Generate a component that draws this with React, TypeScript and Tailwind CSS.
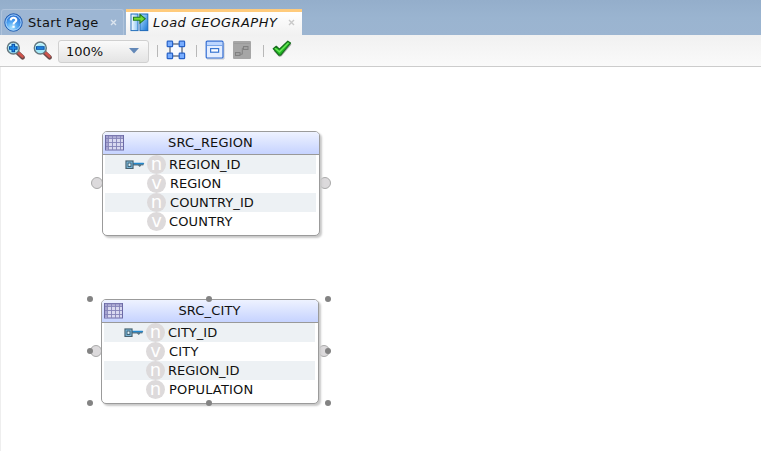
import React from 'react';

type Column = { name: string; kind: 'n' | 'v'; pk?: boolean; indent: string };

function HelpIcon() {
  return (
    <svg width="19" height="19" viewBox="0 0 19 19" className="shrink-0">
      <defs>
        <radialGradient id="help" cx=".4" cy=".8" r=".75">
          <stop offset="0" stopColor="#a4e0ff" />
          <stop offset=".5" stopColor="#4ba0f0" />
          <stop offset="1" stopColor="#286bd0" />
        </radialGradient>
      </defs>
      <circle cx="9.5" cy="9.5" r="8.7" fill="url(#help)" stroke="#225caf" strokeWidth="1" />
      <circle cx="9.5" cy="9.5" r="7.6" fill="none" stroke="#a9d4fb" strokeWidth="1" />
      <path d="M6.7 7.4C6.8 3.9 12.3 4 12.3 7.1C12.3 9.1 9.5 9 9.5 11.4" fill="none" stroke="#fff" strokeWidth="2.1" />
      <rect x="8.4" y="12.6" width="2.3" height="2.2" fill="#fff" />
    </svg>
  );
}

function MappingIcon() {
  return (
    <svg width="19" height="19" viewBox="0 0 19 19" className="shrink-0">
      <defs>
        <linearGradient id="mapL" x2="1"><stop stopColor="#fff" /><stop offset="1" stopColor="#87c3f4" /></linearGradient>
        <linearGradient id="mapR" x2="1" y2="1"><stop stopColor="#b5e3ff" /><stop offset="1" stopColor="#1976d6" /></linearGradient>
      </defs>
      <rect x="1" y="1" width="7" height="16.6" fill="url(#mapL)" stroke="#246fbb" />
      <rect x="10" y="1" width="7.8" height="16.6" fill="url(#mapR)" stroke="#1c68b9" />
      <path d="M3.5 4.2H10V1.4L15.2 5.8L10 10.1V7.3H3.5Z" fill="#75dc35" stroke="#247c1d" strokeWidth="1.1" />
    </svg>
  );
}

function Magnifier({ plus }: { plus?: boolean }) {
  return (
    <svg width="19" height="19" viewBox="0 0 19 19" className="shrink-0">
      <path d="M11.8 11.8L16.6 16.4" stroke="#6a4a4a" strokeWidth="4.4" strokeLinecap="round" />
      <path d="M12.4 11.7L16.5 15.5" stroke="#d0544c" strokeWidth="2.6" strokeLinecap="round" />
      <circle cx="7.3" cy="7" r="6" fill="#a2e8f8" stroke="#66767d" strokeWidth="1.4" />
      <path d="M3.2 5C4.8 2 9.5 2 11 4.7" fill="none" stroke="#dffcff" strokeWidth="1" />
      <path d={plus ? 'M3 7H11.6M7.3 2.7V11.3' : 'M3 7H11.6'} stroke="#0a4da4" strokeWidth="3.6" />
      <path d={plus ? 'M4 7H10.6M7.3 3.7V10.3' : 'M4 7H10.6'} stroke="#218fee" strokeWidth="1.5" />
    </svg>
  );
}

function FitIcon() {
  return (
    <svg width="20" height="20" viewBox="0 0 20 20" className="shrink-0">
      <rect x="4" y="4" width="12" height="12" fill="#f8faff" stroke="#4e5a70" strokeWidth="1.2" />
      <g fill="#78adff" stroke="#2762c8" strokeWidth="1.2">
        <rect x="1.2" y="1.2" width="5.4" height="5.4" rx=".7" /><rect x="13.2" y="1.2" width="5.4" height="5.4" rx=".7" />
        <rect x="1.2" y="13.2" width="5.4" height="5.4" rx=".7" /><rect x="13.2" y="13.2" width="5.4" height="5.4" rx=".7" />
      </g>
    </svg>
  );
}

function CompactIcon() {
  return (
    <svg width="20" height="20" viewBox="0 0 20 20" className="shrink-0">
      <path d="M2 19H19V3" fill="none" stroke="#c2c5cb" />
      <rect x="1.2" y="1.2" width="16.8" height="16.8" rx="1" fill="#e4eeff" stroke="#2f6bd2" strokeWidth="1.2" />
      <rect x="2" y="2" width="15.2" height="3" fill="#bcd6ff" />
      <path d="M2 5.5H17.3" stroke="#78a6eb" />
      <rect x="5.6" y="8.6" width="8" height="3.6" fill="#fff" stroke="#3976d1" strokeWidth="1.2" />
    </svg>
  );
}

function LayoutIcon() {
  return (
    <svg width="20" height="20" viewBox="0 0 20 20" className="shrink-0">
      <rect x="1" y="1" width="18" height="18" rx="1" fill="#a6a6a6" />
      <path d="M2 3.5H18" stroke="#9c9c9c" />
      <path d="M8 14.2H10.3V8.2H12" fill="none" stroke="#828282" />
      <rect x="3.5" y="12.5" width="4.5" height="3" fill="#a0a0a0" stroke="#808080" />
      <rect x="11.5" y="6.5" width="4.5" height="3" fill="#a0a0a0" stroke="#808080" />
    </svg>
  );
}

function CheckIcon() {
  return (
    <svg width="20" height="18" viewBox="0 0 20 18" className="shrink-0">
      <path d="M2 10.6L7.5 16.3L9.2 15.8L19 4.2" fill="none" stroke="#aaa" strokeWidth="1.2" />
      <path d="M1.2 8.7L4.3 6.3L7.4 9.2L15.8 1.2L18.5 3.1L8.7 15.2H6.8Z" fill="#22b924" stroke="#176d1d" strokeWidth="1.2" strokeLinejoin="round" />
      <path d="M3 8.3L7.5 11.8L16.5 2.7" fill="none" stroke="#6be758" strokeWidth="1.3" />
    </svg>
  );
}

function TableIcon() {
  return (
    <svg width="19" height="16" viewBox="0 0 19 16" className="shrink-0">
      <rect x=".5" y=".5" width="18" height="14.5" fill="#d9d9f0" stroke="#6c6aa6" />
      <path d="M1 1.8H18M2 1V15" stroke="#a5a3d0" strokeWidth="2" />
      <path d="M1 3.5H18M1 7.5H18M1 11.5H18M3.5 1V15M7.5 1V15M11.5 1V15M15.5 1V15" stroke="#8583b8" strokeWidth=".9" />
    </svg>
  );
}

function KeyIcon() {
  return (
    <svg width="20" height="10" viewBox="0 0 20 10" className="shrink-0">
      <path d="M8 3H19.3L18.2 5.4L16.5 5.3L14.8 7.1L13 5.5H8Z" fill="#5c7684" />
      <path d="M8 3.5H18.7" stroke="#2289cf" strokeWidth="1.3" />
      <rect x="1" y="1" width="7" height="7.4" fill="#86caf0" stroke="#46606f" strokeWidth="1.2" />
      <rect x="3" y="3" width="3" height="3.4" fill="#e2f5fd" stroke="#35576b" strokeWidth="1" />
    </svg>
  );
}

function Connector({ className }: { className: string }) {
  return <div className={`absolute top-[46px] h-3 w-3 rounded-full border border-[#aaa] bg-[#dcdadc] ${className}`} />;
}

function TableNode({ title, columns, className }: { title: string; columns: Column[]; className: string }) {
  return (
    <div className={`absolute h-[105px] w-[218px] ${className}`}>
      <Connector className="-left-[11px]" />
      <Connector className="-right-[11px]" />
      <div className="relative h-full overflow-hidden rounded-[5px] border border-[#9b9b9b] bg-white shadow-[2px_2px_2px_#c9c9c9]">
        <div className="flex h-[23px] items-center border-b border-[#999] bg-gradient-to-b from-[#eef2ff] to-[#c6d3ff] pl-[2px]">
          <TableIcon />
          <span className="flex-1 pr-[22px] text-center leading-[22px] tracking-[0.15px]">{title}</span>
        </div>
        <div className="ml-[2px] mr-[3px]">
          {columns.map((c) => (
            <div key={c.name} className="flex h-[19px] items-center odd:bg-[#edf1f4]">
              <div className="flex w-[42px] justify-end pr-[2px]">{c.pk && <KeyIcon />}</div>
              <span className="flex h-[19px] w-[19px] items-center justify-center rounded-full bg-[#dddadb] pb-px text-[18px] leading-[18px] text-white">{c.kind}</span>
              <span className={`leading-[19px] ${c.indent}`}>{c.name}</span>
            </div>
          ))}
        </div>
      </div>
    </div>
  );
}

function Handle({ className }: { className: string }) {
  return <div className={`absolute h-[6px] w-[6px] rounded-full bg-[#838383] ${className}`} />;
}

export default function App() {
  return (
    <div className="flex h-[451px] w-[761px] flex-col overflow-hidden bg-white font-['DejaVu_Sans',sans-serif] text-[13px] text-[#111]">
      <div className="flex h-[35px] shrink-0 items-end bg-gradient-to-b from-[#94aecb] via-[#9ab4d0] to-[#9cb5d1]">
        <div className="ml-px flex h-[26px] w-[123px] items-center rounded-t-[3px] border-x border-t border-[#b0c4dc] bg-[#9db6d3] pb-px pl-[2px]">
          <HelpIcon />
          <span className="ml-[5px] mt-[2px] whitespace-nowrap tracking-[0.32px]">Start Page</span>
          <svg className="ml-[11px]" width="7" height="7" viewBox="0 0 7 7"><path d="M1 1L6 6M6 1L1 6" stroke="#dce5ef" strokeWidth="1.4" /></svg>
        </div>
        <div className="ml-[2px] flex h-[26px] w-[176px] items-center border-t-[3px] border-[#ffcb7c] bg-gradient-to-b from-white to-[#f1f1f1] pb-[3px] pl-[4px]">
          <MappingIcon />
          <span className="ml-[4px] mt-[2px] whitespace-nowrap italic tracking-[0.48px]">Load GEOGRAPHY</span>
          <svg className="ml-[11px]" width="7" height="7" viewBox="0 0 7 7"><path d="M1 1L6 6M6 1L1 6" stroke="#c9c9c9" strokeWidth="1.4" /></svg>
        </div>
      </div>
      <div className="flex h-8 shrink-0 items-center border-b border-[#ccc] bg-gradient-to-b from-[#f1f1f1] to-[#fafafa] pl-[6px]">
        <div className="flex pb-px"><Magnifier plus /></div>
        <div className="ml-[8px] flex pb-px"><Magnifier /></div>
        <div className="ml-[6px] mt-px flex h-[23px] w-[91px] items-center justify-between rounded-[3px] border border-[#d0d0d0] bg-gradient-to-b from-[#fafafa] to-[#e4e4e4] pl-[7px] pr-[9px]">
          <span className="pt-px">100%</span>
          <svg width="10" height="6" viewBox="0 0 10 6"><path d="M0 0H10L5 5.5Z" fill="#6388b8" /></svg>
        </div>
        <div className="ml-[8px] h-[12px] w-px bg-[#b8b8b8]" />
        <div className="ml-[8px] pb-[2px]"><FitIcon /></div>
        <div className="ml-[10px] h-[12px] w-px bg-[#b8b8b8]" />
        <div className="ml-[8px] pb-px"><CompactIcon /></div>
        <div className="ml-[7px] pb-[2px]"><LayoutIcon /></div>
        <div className="ml-[11px] h-[12px] w-px bg-[#b8b8b8]" />
        <div className="ml-[8px] pb-[3px]"><CheckIcon /></div>
      </div>
      <div className="relative flex-1 border-l border-[#eee] bg-white">
        <TableNode title="SRC_REGION" className="left-[101px] top-[64px]" columns={[
          { name: 'REGION_ID', kind: 'n', pk: true, indent: 'ml-[3px]' },
          { name: 'REGION', kind: 'v', indent: 'ml-[4px]' },
          { name: 'COUNTRY_ID', kind: 'n', indent: 'ml-[4px] tracking-[0.1px]' },
          { name: 'COUNTRY', kind: 'v', indent: 'ml-[3px] tracking-[0.15px]' },
        ]} />
        <TableNode title="SRC_CITY" className="left-[100px] top-[232px]" columns={[
          { name: 'CITY_ID', kind: 'n', pk: true, indent: 'ml-[3px]' },
          { name: 'CITY', kind: 'v', indent: 'ml-[4px] tracking-[0.2px]' },
          { name: 'REGION_ID', kind: 'n', indent: 'ml-[3px]' },
          { name: 'POPULATION', kind: 'n', indent: 'ml-[4px] tracking-[0.18px]' },
        ]} />
        <Handle className="left-[85.5px] top-[228.5px]" />
        <Handle className="left-[204.5px] top-[228.5px]" />
        <Handle className="left-[323.5px] top-[228.5px]" />
        <Handle className="left-[85.5px] top-[281px]" />
        <Handle className="left-[323.5px] top-[281px]" />
        <Handle className="left-[85.5px] top-[332.5px]" />
        <Handle className="left-[204.5px] top-[332.5px]" />
        <Handle className="left-[323.5px] top-[332.5px]" />
      </div>
    </div>
  );
}
